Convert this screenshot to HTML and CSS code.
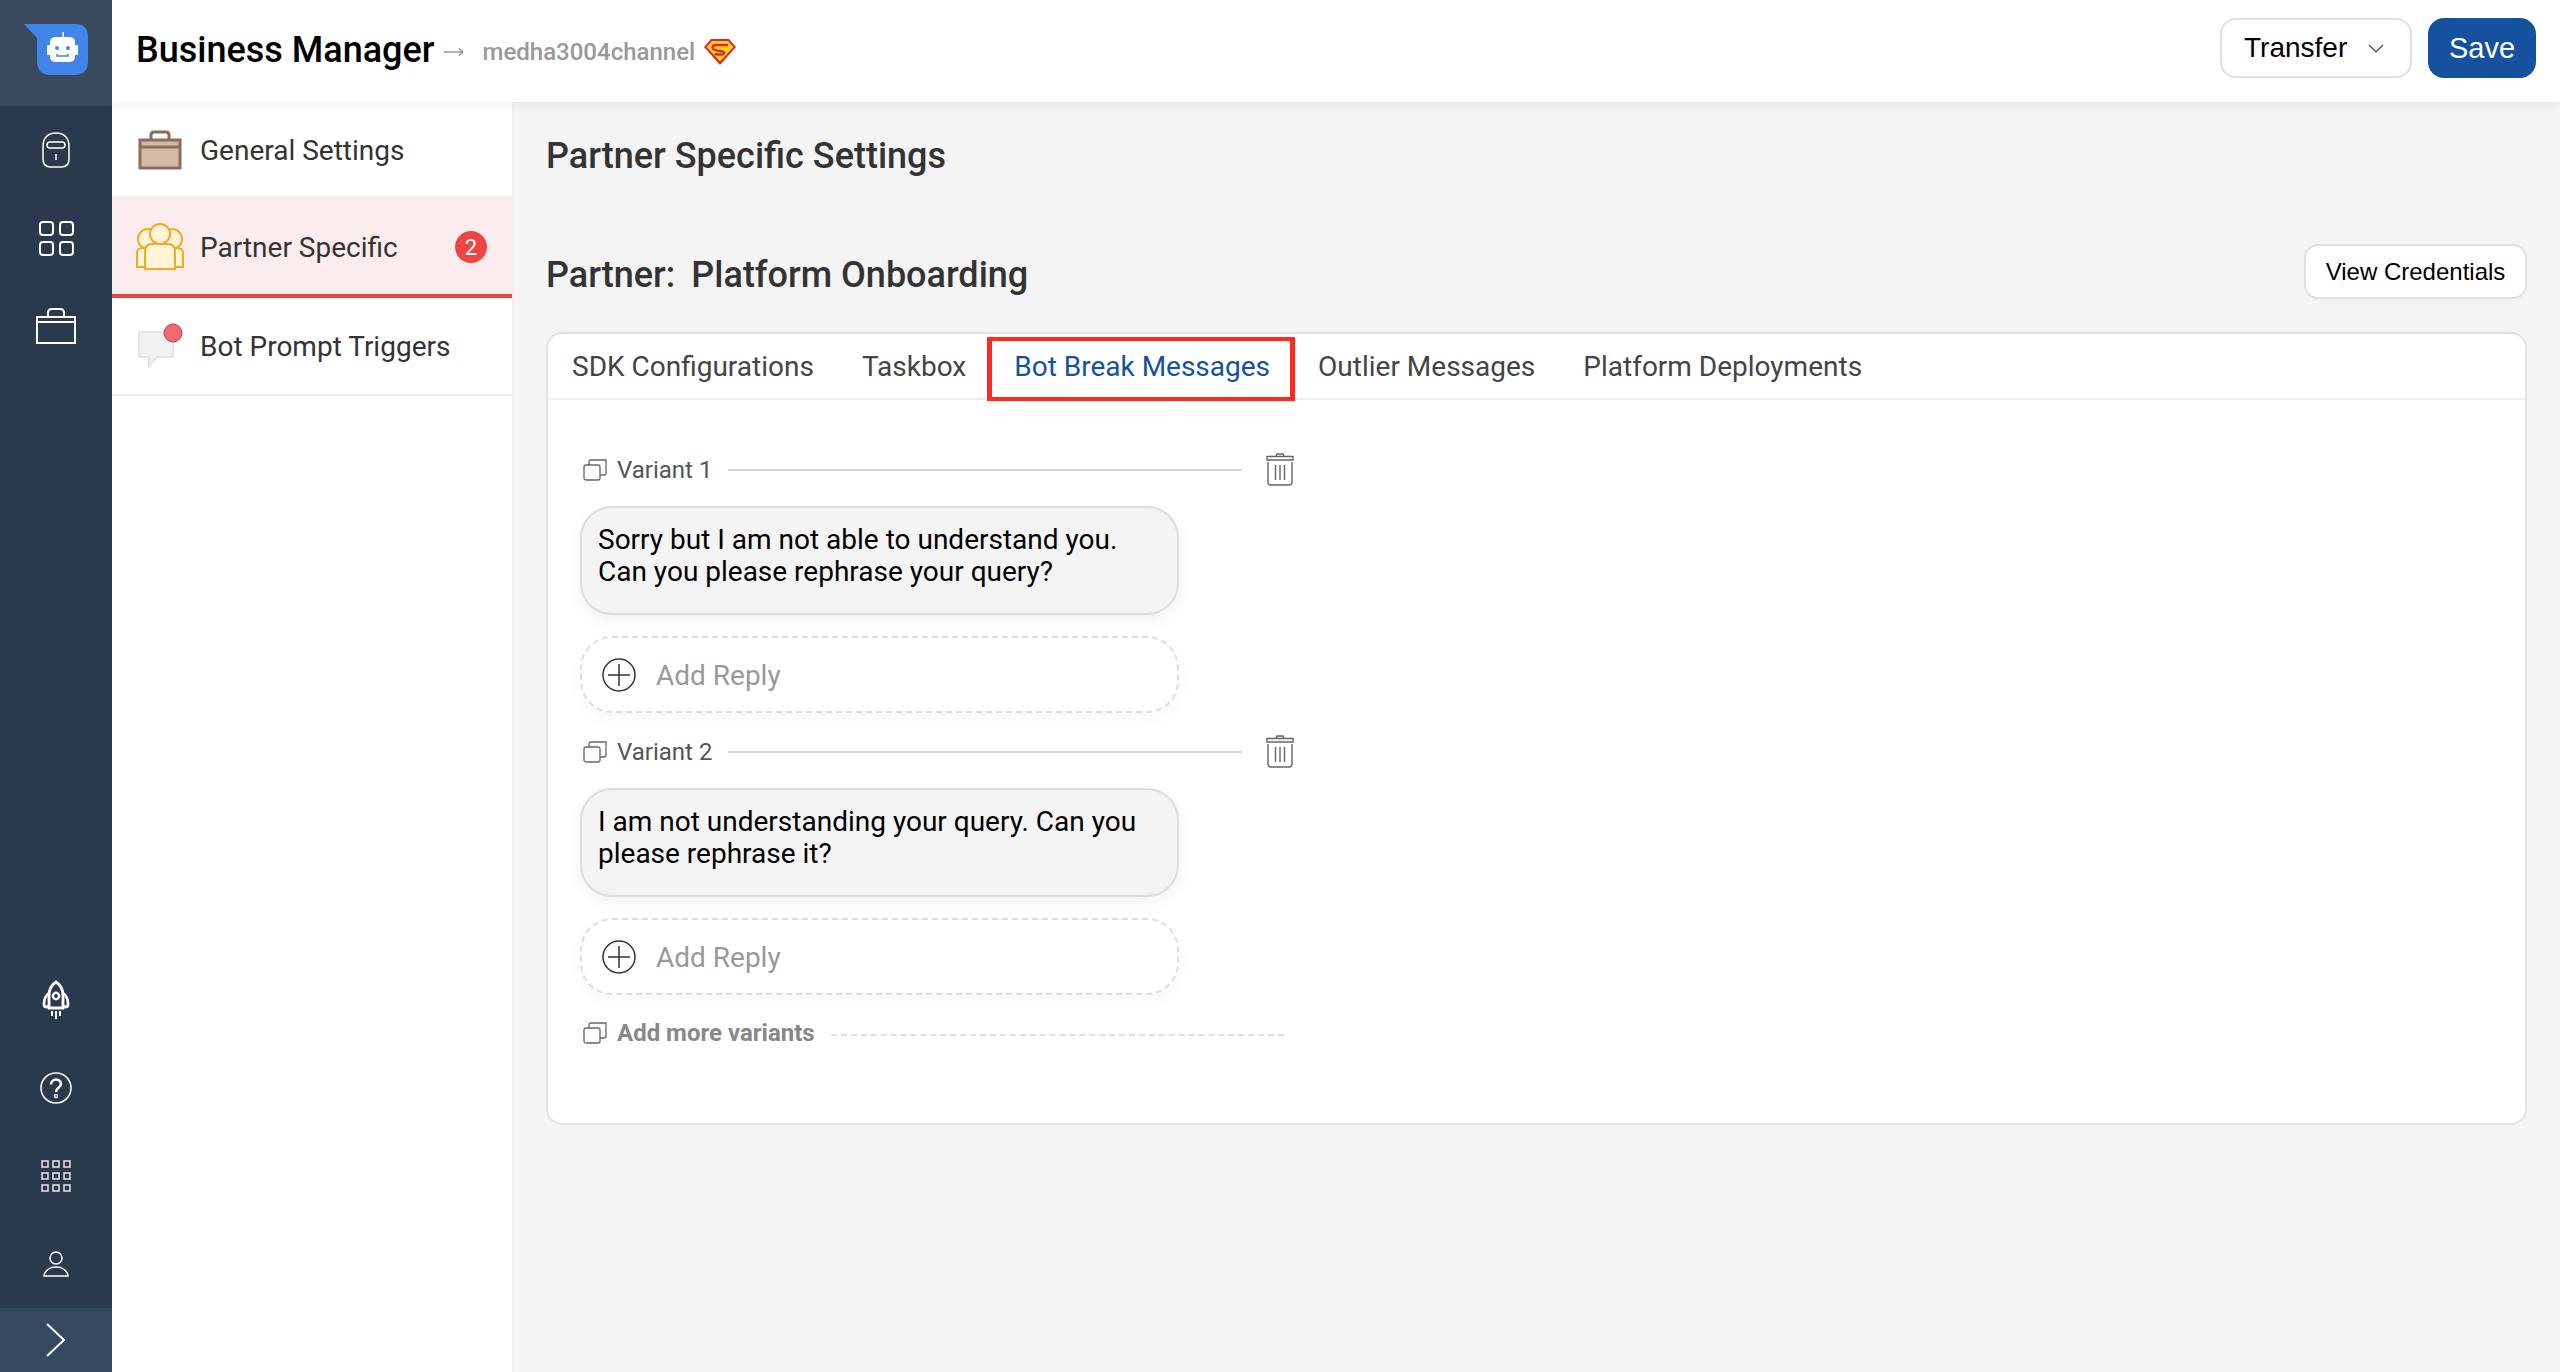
FILE: index.html
```html
<!DOCTYPE html>
<html lang="en">
<head>
    <meta charset="UTF-8">
    <meta name="viewport" content="width=device-width, initial-scale=1.0">
    <title>Business Manager</title>
    <link rel="stylesheet" href="styles.css">
</head>
<body>
    <aside class="rail">
        <div class="rail-logo">
            <svg width="64" height="51" viewBox="0 0 64 51">
                <path d="M0 0H51Q64 0 64 13V37Q64 51 50 51H27Q13 51 13 37V14Z" fill="#4285ea"/>
                <rect x="38.500" y="8" width="1.500" height="6" fill="#fff"/>
                <rect x="23" y="21" width="4" height="10" rx="1" fill="#fff"/>
                <rect x="50" y="21" width="4" height="10" rx="1" fill="#fff"/>
                <rect x="26" y="13" width="25" height="25" rx="5" fill="#fff"/>
                <circle cx="33" cy="24" r="2" fill="#4285ea"/>
                <circle cx="44" cy="24" r="2" fill="#4285ea"/>
                <path d="M33 30V32H44V30" fill="none" stroke="#4285ea" stroke-width="1.500"/>
            </svg>
        </div>
        <div class="rail-slot">
            <svg width="28" height="36" viewBox="0 0 28 36" fill="none" stroke="#fff" stroke-width="1.500">
                <path d="M1 14C1 6 6 1 14 1S27 6 27 14V27Q27 35 19 35H9Q1 35 1 27Z"/>
                <rect x="5" y="10" width="18" height="6" rx="3"/>
                <path d="M14 22V28"/>
            </svg>
        </div>
        <div class="rail-slot">
            <svg width="36" height="36" viewBox="0 0 36 36" fill="none" stroke="#fff" stroke-width="2">
                <rect x="2" y="2" width="13" height="13" rx="3"/>
                <rect x="22" y="2" width="13" height="13" rx="3"/>
                <rect x="2" y="22" width="13" height="13" rx="3"/>
                <rect x="22" y="22" width="13" height="13" rx="3"/>
            </svg>
        </div>
        <div class="rail-slot">
            <svg width="40" height="36" viewBox="0 0 40 36" fill="none" stroke="#fff" stroke-width="2">
                <rect x="1" y="9" width="38" height="26"/>
                <path d="M1 14H39M12 9V5Q12 1 16 1H24Q28 1 28 5V9"/>
            </svg>
        </div>
        <div class="rail-bottom">
            <div class="rail-slot">
                <svg width="28" height="40" viewBox="0 0 28 40" fill="none" stroke="#fff" stroke-width="2.800">
                    <path d="M14 2C9 5 7 10 7 16V28H21V16C21 10 19 5 14 2Z"/>
                    <circle cx="14" cy="16" r="3.200" stroke-width="2.400"/>
                    <path d="M7 13C3 16 2 19 2 24C2 26 3 27 4 27L7 26M21 13C25 16 26 19 26 24C26 26 25 27 24 27L21 26"/>
                    <path d="M10 31V36M14 31V39M18 31V36" stroke-width="2"/>
                </svg>
            </div>
            <div class="rail-slot">
                <svg width="32" height="32" viewBox="0 0 32 32" fill="none" stroke="#fff">
                    <circle cx="16" cy="16" r="15" stroke-width="1.500"/>
                    <path d="M11 12.500C11 9.500 13.500 7.500 16 7.500S21 9.500 21 12C21 15.500 16 15.500 16 20" stroke-width="2.500"/>
                    <circle cx="16" cy="24" r="1.500" stroke-width="1.500"/>
                </svg>
            </div>
            <div class="rail-slot">
                <svg width="32" height="32" viewBox="0 0 32 32" fill="none" stroke="#ddd" stroke-width="1.600">
                    <rect x="2" y="1" width="6" height="6"/><rect x="13" y="1" width="6" height="6"/><rect x="24" y="1" width="6" height="6"/>
                    <rect x="2" y="13" width="6" height="6"/><rect x="13" y="13" width="6" height="6"/><rect x="24" y="13" width="6" height="6"/>
                    <rect x="2" y="25" width="6" height="6"/><rect x="13" y="25" width="6" height="6"/><rect x="24" y="25" width="6" height="6"/>
                </svg>
            </div>
            <div class="rail-slot">
                <svg width="26" height="26" viewBox="0 0 26 26" fill="none" stroke="#fff" stroke-width="1.500">
                    <circle cx="13" cy="7" r="6"/>
                    <path d="M1 25C2 19 7 16 13 16S24 19 25 25Z"/>
                </svg>
            </div>
        </div>
        <div class="rail-expand">
            <svg width="20" height="34" viewBox="0 0 20 34" fill="none" stroke="#fff" stroke-width="2">
                <path d="M1 1L18 17L1 33"/>
            </svg>
        </div>
    </aside>

    <div class="page">
        <header class="topbar">
            <h1>Business Manager</h1>
            <svg class="crumb-arrow" width="20" height="10" viewBox="0 0 20 10" fill="none" stroke="#999" stroke-width="1.500">
                <path d="M0 5H19M15 1.500L19 5L15 8.500"/>
            </svg>
            <span class="channel">medha3004channel</span>
            <svg class="shield" width="32" height="26" viewBox="0 0 32 26">
                <path d="M7 0H25L32 8L16 26L0 8Z" fill="#e3242b"/>
                <path d="M8 2H24L29.500 8L16 22.500L2.500 8Z" fill="#f9d423"/>
                <path d="M24 6H12Q7.500 6 9 9.500Q10 11.500 16 12Q21 12.500 20 14.500Q19 16.500 10.500 15" fill="none" stroke="#e3242b" stroke-width="2.400"/>
            </svg>
            <div class="topbar-actions">
                <button class="btn-transfer">Transfer
                    <svg width="16" height="9" viewBox="0 0 16 9" fill="none" stroke="#444" stroke-width="1.200">
                        <path d="M1 1L8 8L15 1"/>
                    </svg>
                </button>
                <button class="btn-save">Save</button>
            </div>
        </header>

        <div class="content">
            <nav class="sidenav">
                <a class="sidenav-item">
                    <span class="sidenav-icon">
                        <svg width="44" height="40" viewBox="0 0 44 40">
                            <path d="M13 10V5Q13 2 16 2H28Q31 2 31 5V10" fill="none" stroke="#8b6f5c" stroke-width="3"/>
                            <rect x="2" y="10" width="40" height="28" fill="#d3b9a8" stroke="#8b6f5c" stroke-width="3"/>
                            <path d="M2 17H42" stroke="#8b6f5c" stroke-width="3"/>
                        </svg>
                    </span>
                    General Settings
                </a>
                <a class="sidenav-item active">
                    <span class="sidenav-icon">
                        <svg width="48" height="48" viewBox="0 0 48 48" fill="#fef5d8" stroke="#f5a928" stroke-width="2">
                            <circle cx="12" cy="16" r="10"/>
                            <circle cx="36" cy="16" r="10"/>
                            <path d="M1 44V30Q1 25 7 25H41Q47 25 47 30V44H38V46H10V44Z"/>
                            <circle cx="24" cy="11" r="10"/>
                            <path d="M9 46V28Q9 21 16 21H32Q39 21 39 28V46Z"/>
                        </svg>
                    </span>
                    Partner Specific
                    <span class="badge">2</span>
                </a>
                <a class="sidenav-item sidenav-last">
                    <span class="sidenav-icon">
                        <svg width="46" height="46" viewBox="0 0 46 46">
                            <path d="M2 9H36V34H20L12 43V34H2Z" fill="#f2f2f2" stroke="#e4e4e4" stroke-width="2"/>
                            <circle cx="36" cy="10" r="9" fill="#f6666e" stroke="#a94a50"/>
                        </svg>
                    </span>
                    Bot Prompt Triggers
                </a>
            </nav>

            <main class="settings">
                <h2 class="settings-title">Partner Specific Settings</h2>
                <div class="partner-row">
                    <h2 class="partner-name"><span>Partner:</span>Platform Onboarding</h2>
                    <button class="btn-credentials">View Credentials</button>
                </div>

                <section class="card">
                    <div class="tabs">
                        <a class="tab">SDK Configurations</a>
                        <a class="tab">Taskbox</a>
                        <a class="tab tab-active">Bot Break Messages<span class="tab-mark"></span></a>
                        <a class="tab">Outlier Messages</a>
                        <a class="tab">Platform Deployments</a>
                    </div>
                    <div class="pane">
                        <div class="variant">
                            <div class="variant-head">
                                <svg class="copy-icon" width="24" height="22" viewBox="0 0 24 22" fill="none" stroke="#666" stroke-width="1.300"><rect x="1" y="6" width="16" height="15" rx="2"/><path d="M6 6V3Q6 1 8 1H23V14Q23 16 21 16H17"/></svg>
                                <span class="variant-label">Variant 1</span>
                                <span class="variant-line"></span>
                                <svg class="trash-icon" width="28" height="33" viewBox="0 0 28 33" fill="none" stroke="#666" stroke-width="1.400"><path d="M1 3.500H27V7H1ZM10 3.500L11 1H17L18 3.500"/><path d="M2 9V29Q2 32 5 32H23Q26 32 26 29V9M9.500 12V27M14 12V27M18.500 12V27"/></svg>
                            </div>
                            <div class="bubble">Sorry but I am not able to understand you. Can you please rephrase your query?</div>
                            <div class="add-reply">
                                <svg width="34" height="34" viewBox="0 0 34 34" fill="none" stroke="#333" stroke-width="1.500"><circle cx="17" cy="17" r="16"/><path d="M17 6V28M6 17H28"/></svg>
                                Add Reply
                            </div>
                        </div>
                        <div class="variant">
                            <div class="variant-head">
                                <svg class="copy-icon" width="24" height="22" viewBox="0 0 24 22" fill="none" stroke="#666" stroke-width="1.300"><rect x="1" y="6" width="16" height="15" rx="2"/><path d="M6 6V3Q6 1 8 1H23V14Q23 16 21 16H17"/></svg>
                                <span class="variant-label">Variant 2</span>
                                <span class="variant-line"></span>
                                <svg class="trash-icon" width="28" height="33" viewBox="0 0 28 33" fill="none" stroke="#666" stroke-width="1.400"><path d="M1 3.500H27V7H1ZM10 3.500L11 1H17L18 3.500"/><path d="M2 9V29Q2 32 5 32H23Q26 32 26 29V9M9.500 12V27M14 12V27M18.500 12V27"/></svg>
                            </div>
                            <div class="bubble">I am not understanding your query. Can you please rephrase it?</div>
                            <div class="add-reply">
                                <svg width="34" height="34" viewBox="0 0 34 34" fill="none" stroke="#333" stroke-width="1.500"><circle cx="17" cy="17" r="16"/><path d="M17 6V28M6 17H28"/></svg>
                                Add Reply
                            </div>
                        </div>
                        <div class="add-variant">
                            <svg class="copy-icon" width="24" height="22" viewBox="0 0 24 22" fill="none" stroke="#666" stroke-width="1.300"><rect x="1" y="6" width="16" height="15" rx="2"/><path d="M6 6V3Q6 1 8 1H23V14Q23 16 21 16H17"/></svg>
                            <span class="add-variant-label">Add more variants</span>
                            <span class="add-variant-line"></span>
                        </div>
                    </div>
                </section>
            </main>
        </div>
    </div>
</body>
</html>
```

FILE: styles.css
```css
* {
    box-sizing: border-box;
}
html, body {
    height: 100%;
}
body {
    margin: 0;
    display: flex;
    height: 1372px;
    overflow: hidden;
    font-family: Roboto, 'Liberation Sans', sans-serif;
    background-color: #f4f4f4;
    color: #333;
}
svg {
    display: block;
    flex-shrink: 0;
}

/* left rail */
.rail {
    width: 112px;
    flex-shrink: 0;
    display: flex;
    flex-direction: column;
    background-color: #2a394c;
}
.rail-logo {
    height: 106px;
    padding: 24px 0 0 24px;
    background-color: #3a4a5e;
}
.rail-slot {
    height: 88px;
    display: flex;
    align-items: center;
    justify-content: center;
}
.rail-bottom {
    margin-top: auto;
}
.rail-expand {
    height: 64px;
    display: flex;
    align-items: center;
    justify-content: center;
    background-color: #34495e;
}

/* top bar */
.page {
    flex: 1;
    min-width: 0;
    display: flex;
    flex-direction: column;
}
.topbar {
    height: 102px;
    flex-shrink: 0;
    display: flex;
    align-items: center;
    padding: 0 24px;
    background-color: #fff;
    box-shadow: 0 2px 10px rgba(0, 0, 0, 0.06);
    position: relative;
}
.topbar h1 {
    margin: -2px 0 0;
    font-size: 36px;
    font-weight: 500;
    color: #000;
}
.crumb-arrow {
    margin: 2px 0 0 9px;
}
.channel {
    margin: 2px 0 0 19px;
    font-size: 24px;
    font-weight: 500;
    color: #999;
}
.shield {
    margin: 1px 0 0 9px;
}
.topbar-actions {
    margin: -6px 0 0 auto;
    display: flex;
    gap: 16px;
}
.topbar-actions button {
    height: 60px;
    font-family: 'Liberation Sans', Arial, sans-serif;
    border-radius: 16px;
    cursor: pointer;
}
.btn-transfer {
    width: 192px;
    display: flex;
    align-items: center;
    justify-content: space-between;
    padding: 0 26px 0 22px;
    background: #fff;
    color: #000;
    border: 2px solid #e0e0e0;
    font-size: 28px;
}
.btn-save {
    width: 108px;
    padding: 0;
    background: #15519f;
    color: #fff;
    border: none;
    font-size: 29px;
}

/* second level nav */
.content {
    flex: 1;
    display: flex;
    min-height: 0;
}
.sidenav {
    width: 402px;
    flex-shrink: 0;
    background-color: #fff;
    border-right: 2px solid #f0f0f0;
}
.sidenav-item {
    height: 96px;
    display: flex;
    align-items: center;
    padding: 2px 24px 0;
    font-size: 28px;
    color: #333;
    border-bottom: 2px solid #eee;
}
.sidenav-item.active {
    height: 100px;
    background-color: #fbeced;
    border-bottom: 4px solid #ef4444;
}
.sidenav-last {
    height: 98px;
    padding-top: 0;
}
.sidenav-icon {
    width: 64px;
    display: flex;
    justify-content: center;
}
.sidenav-icon svg {
    margin-left: -16px;
}
.badge {
    margin-left: auto;
    margin-right: 1px;
    width: 32px;
    height: 32px;
    border-radius: 50%;
    display: flex;
    align-items: center;
    justify-content: center;
    background-color: #ef4444;
    color: #fff;
    font-size: 22px;
}

/* main area */
.settings {
    flex: 1;
    min-width: 0;
    padding: 0 33px 0 32px;
}
.settings-title, .partner-name {
    margin: 0;
    font-size: 36px;
    font-weight: 500;
    color: #333;
}
.settings-title {
    height: 106px;
    padding-top: 33px;
}
.partner-row {
    height: 124px;
    display: flex;
    align-items: flex-start;
    justify-content: space-between;
    padding-top: 36px;
}
.partner-name {
    line-height: 54px;
    margin-top: 4px;
}
.partner-name span {
    margin-right: 16px;
}
.btn-credentials {
    height: 55px;
    width: 223px;
    padding: 0;
    background: #fff;
    color: #000;
    border: 2px solid #e0e0e0;
    border-radius: 14px;
    font-family: 'Liberation Sans', Arial, sans-serif;
    font-size: 24px;
}

.card {
    height: 793px;
    background-color: #fff;
    border: 2px solid #e2e2e2;
    border-radius: 16px;
}
.tabs {
    height: 66px;
    display: flex;
    align-items: center;
    border-bottom: 2px solid #eee;
}
.tab {
    position: relative;
    padding: 0 24px;
    font-size: 28px;
    color: #444;
}
.tab-active {
    color: #15519f;
}
/* red annotation box drawn over the active tab */
.tab-mark {
    position: absolute;
    left: -3px;
    right: -1px;
    top: -13px;
    height: 64px;
    border-style: solid;
    border-color: #ff2a1f;
    border-width: 4px 5px;
}
.pane {
    padding: 53px 0 0 32px;
}
.variant-head {
    width: 714px;
    height: 34px;
    display: flex;
    align-items: center;
}
.copy-icon {
    margin-left: 3px;
}
.variant-label {
    margin-left: 10px;
    font-size: 24px;
    color: #555;
}
.variant-line {
    flex: 1;
    height: 2px;
    margin: 0 24px 0 16px;
    background-color: #d4d4d4;
}
.trash-icon {
    margin-top: -2px;
}
.bubble {
    width: 599px;
    height: 109px;
    margin-top: 19px;
    padding: 16px 30px 0 16px;
    background-color: #f4f4f4;
    border: 2px solid #ddd;
    border-radius: 32px;
    box-shadow: 0 6px 16px rgba(0, 0, 0, 0.05);
    font-size: 28px;
    line-height: 32px;
    color: #000;
}
.add-reply {
    width: 599px;
    height: 77px;
    margin: 21px 0 22px;
    display: flex;
    align-items: center;
    gap: 20px;
    padding: 1px 0 0 20px;
    border: 2px dashed #ddd;
    border-radius: 32px;
    box-shadow: 0 6px 16px rgba(0, 0, 0, 0.03);
    font-size: 28px;
    color: #999;
}
.add-variant {
    width: 704px;
    height: 34px;
    display: flex;
    align-items: center;
    margin-top: -1px;
}
.add-variant-label {
    margin-left: 10px;
    font-size: 24px;
    font-weight: 700;
    color: #888;
}
.add-variant-line {
    flex: 1;
    margin: 4px 0 0 16px;
    border-top: 2px dashed #e0e0e0;
}
```
